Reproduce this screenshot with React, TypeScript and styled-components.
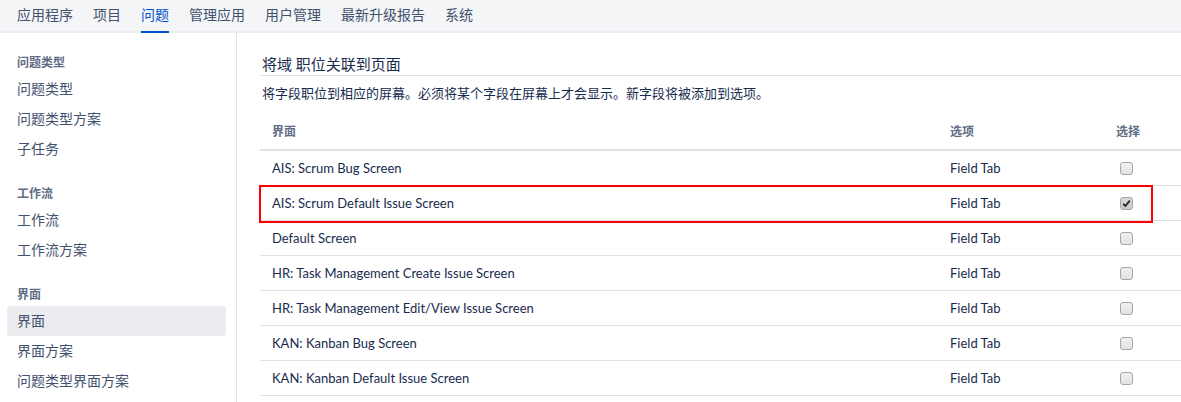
import React, { useState } from 'react';
import styled, { createGlobalStyle } from 'styled-components';

const tabs = ['应用程序', '项目', '问题', '管理应用', '用户管理', '最新升级报告', '系统'];

const groups = [
  { title: '问题类型', items: ['问题类型', '问题类型方案', '子任务'] },
  { title: '工作流', items: ['工作流', '工作流方案'] },
  { title: '界面', items: ['界面', '界面方案', '问题类型界面方案'] },
];

const screens = [
  'AIS: Scrum Bug Screen',
  'AIS: Scrum Default Issue Screen',
  'Default Screen',
  'HR: Task Management Create Issue Screen',
  'HR: Task Management Edit/View Issue Screen',
  'KAN: Kanban Bug Screen',
  'KAN: Kanban Default Issue Screen',
];

const App: React.FC<{}> = () => {
  const [checked, setChecked] = useState<number[]>([1]);

  const toggle = (index: number) => {
    setChecked(old => old.includes(index) ? old.filter(i => i !== index) : [...old, index]);
  };

  return (
    <>
      <GlobalStyle />
      <StyledNav>
        {tabs.map(tab => (
          <StyledTab key={tab} active={tab === '问题'}>{tab}</StyledTab>
        ))}
      </StyledNav>
      <StyledPage>
        <StyledSidebar>
          {groups.map(group => (
            <StyledGroup key={group.title}>
              <StyledGroupTitle>{group.title}</StyledGroupTitle>
              {group.items.map(item => (
                <StyledSideItem key={item} selected={group.title === '界面' && item === '界面'}>
                  {item}
                </StyledSideItem>
              ))}
            </StyledGroup>
          ))}
        </StyledSidebar>
        <StyledMain>
          <StyledTitle>将域 职位关联到页面</StyledTitle>
          <StyledDescription>将字段职位到相应的屏幕。必须将某个字段在屏幕上才会显示。新字段将被添加到选项。</StyledDescription>
          <StyledTable>
            <StyledHeadRow>
              <StyledHeadCell>界面</StyledHeadCell>
              <StyledHeadCell>选项</StyledHeadCell>
              <StyledHeadCell>选择</StyledHeadCell>
            </StyledHeadRow>
            {screens.map((screen, index) => (
              <StyledRow key={screen} highlighted={index === 1}>
                <StyledCell>{screen}</StyledCell>
                <StyledCell>Field Tab</StyledCell>
                <StyledCell>
                  <StyledCheckbox checked={checked.includes(index)} onClick={() => toggle(index)}>
                    {checked.includes(index) && (
                      <svg width="9" height="9" viewBox="0 0 9 9">
                        <path d="M1.2 4.8 L3.4 7 L7.8 1.6" fill="none" stroke="#222" strokeWidth="1.8" />
                      </svg>
                    )}
                  </StyledCheckbox>
                </StyledCell>
              </StyledRow>
            ))}
          </StyledTable>
        </StyledMain>
      </StyledPage>
    </>
  );
}

const GlobalStyle = createGlobalStyle`
  body {
    margin: 0;
    background: #fff;
    font-family: "Segoe UI", Lato, "Noto Sans CJK SC", sans-serif;
    color: #172b4d;
  }
`

const StyledNav = styled.div`
  display: flex;
  height: 31px;
  padding-left: 7px;
  background: #f4f5f7;
  border-bottom: 2px solid #ebecf0;
`

const StyledTab = styled.div<{ active?: boolean }>`
  margin: 0 10px;
  font-size: 14px;
  line-height: 29px;
  color: ${p => p.active ? '#0052cc' : '#42526e'};
  border-bottom: 2px solid ${p => p.active ? '#0052cc' : 'transparent'};
  margin-bottom: -2px;
`

const StyledPage = styled.div`
  display: flex;
  min-height: calc(100vh - 33px);
`

const StyledSidebar = styled.div`
  padding: 22px 10px 0 7px;
  box-sizing: border-box;
  flex: 0 0 237px;
  border-right: 1px solid #dfe1e6;
`

const StyledGroup = styled.div`
  & + & {
    margin-top: 22px;
  }
`

const StyledGroupTitle = styled.div`
  padding-left: 10px;
  font-size: 12px;
  font-weight: bold;
  line-height: 16px;
  color: #5e6c84;
  margin-bottom: 3px;
`

const StyledSideItem = styled.div<{ selected?: boolean }>`
  height: 30px;
  line-height: 30px;
  padding-left: 10px;
  font-size: 14px;
  color: #42526e;
  border-radius: 3px;
  background: ${p => p.selected ? '#ebecf0' : 'transparent'};
`

const StyledMain = styled.div`
  flex: 1;
  padding: 21px 0 0 23px;
`

const StyledTitle = styled.h2`
  margin: 0;
  padding: 0 0 1px 2px;
  font-size: 15px;
  font-weight: normal;
  line-height: 20px;
  color: #172b4d;
  border-bottom: 1px solid #dfe1e6;
`

const StyledDescription = styled.p`
  margin: 8px 0 13px 2px;
  font-size: 13px;
  line-height: 18px;
  color: #172b4d;
`

const StyledTable = styled.div`
  display: grid;
  grid-template-columns: 678px 166px 1fr;
`

const StyledHeadRow = styled.div`
  display: contents;
`

const StyledHeadCell = styled.div`
  height: 34px;
  line-height: 34px;
  padding-left: 12px;
  font-size: 12px;
  font-weight: bold;
  color: #5e6c84;
  border-bottom: 2px solid #dfe1e6;
`

const StyledRow = styled.div<{ highlighted?: boolean }>`
  grid-column: 1 / -1;
  display: grid;
  grid-template-columns: subgrid;
  position: relative;
  border-bottom: 1px solid #dfe1e6;

  &::after {
    content: '';
    display: ${p => p.highlighted ? 'block' : 'none'};
    position: absolute;
    left: -1px;
    top: -1px;
    width: 894px;
    height: 38px;
    box-sizing: border-box;
    border: 2px solid #ff0000;
    pointer-events: none;
  }
`

const StyledCell = styled.div`
  height: 34px;
  display: flex;
  align-items: center;
  padding-left: 12px;
  font-size: 13px;
  color: #172b4d;
`

const StyledCheckbox = styled.span<{ checked?: boolean }>`
  width: 11px;
  height: 11px;
  margin-left: 4px;
  display: flex;
  align-items: center;
  justify-content: center;
  border: 1px solid #a6a6a6;
  border-radius: 3px;
  background: ${p => p.checked ? 'linear-gradient(#d8d8d8, #c8c8c8)' : 'linear-gradient(#f0f0f0, #e2e2e2)'};
  cursor: pointer;
`

export default App;
